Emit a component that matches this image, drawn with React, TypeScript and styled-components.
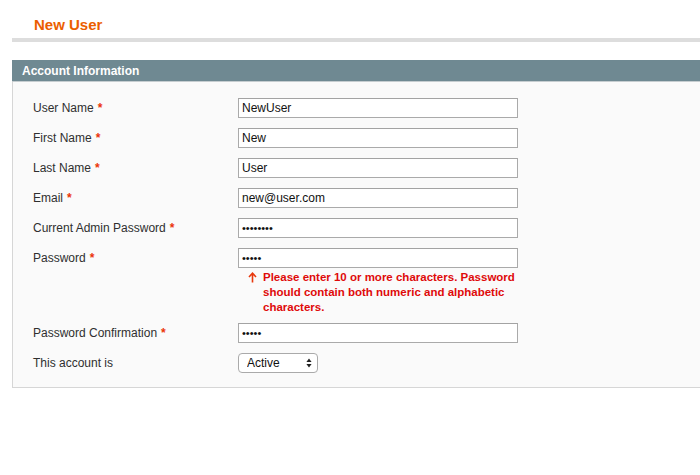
import styled, { createGlobalStyle } from 'styled-components';

const GlobalStyle = createGlobalStyle`
    html, body {
        margin: 0;
        padding: 0;
        background: #fff;
        font-family: "Liberation Sans", Arial, Helvetica, sans-serif;
    }
`

type Field = {
    label: string
    value: string
    required?: boolean
    type?: string
    error?: string
}

const fields: Field[] = [
    { label: 'User Name', value: 'NewUser', required: true },
    { label: 'First Name', value: 'New', required: true },
    { label: 'Last Name', value: 'User', required: true },
    { label: 'Email', value: 'new@user.com', required: true },
    { label: 'Current Admin Password', value: '12345678', required: true, type: 'password' },
    {
        label: 'Password',
        value: '12345',
        required: true,
        type: 'password',
        error: 'Please enter 10 or more characters. Password should contain both numeric and alphabetic characters.',
    },
    { label: 'Password Confirmation', value: '12345', required: true, type: 'password' },
]

const ArrowUp = () => (
    <svg width="9" height="11" viewBox="0 0 9 11">
        <path d="M4.5 10.5V1.5M1 5l3.5-3.8L8 5" fill="none" stroke="#e8380d" strokeWidth="1.6" />
    </svg>
)

const SelectArrows = () => (
    <svg width="6" height="10" viewBox="0 0 6 10">
        <path d="M3 0.5L5.6 4H0.4z M3 9.5L5.6 6H0.4z" fill="#222" />
    </svg>
)

const App = () => {
    return (
        <Page>
            <GlobalStyle />
            <TitleBar>
                <h3>New User</h3>
            </TitleBar>
            <Fieldset>
                <Legend>Account Information</Legend>
                <FormBody>
                    {fields.map((f) => (
                        <Row key={f.label}>
                            <Label>
                                {f.label}
                                {f.required && <span className="required">*</span>}
                            </Label>
                            <Value>
                                <TextInput type={f.type || 'text'} defaultValue={f.value} readOnly />
                                {f.error && (
                                    <Advice>
                                        <ArrowUp />
                                        <span>{f.error}</span>
                                    </Advice>
                                )}
                            </Value>
                        </Row>
                    ))}
                    <Row>
                        <Label>This account is</Label>
                        <Value>
                            <SelectWrap>
                                <select defaultValue="1">
                                    <option value="1">Active</option>
                                    <option value="0">Inactive</option>
                                </select>
                                <span className="arrows"><SelectArrows /></span>
                            </SelectWrap>
                        </Value>
                    </Row>
                </FormBody>
            </Fieldset>
        </Page>
    )
}
export default App;

const Page = styled.div`
    width: 700px;
    height: 475px;
    overflow: hidden;
    padding-left: 12px;
    box-sizing: border-box;
`

const TitleBar = styled.div`
    height: 38px;
    border-bottom: 4px solid #dddddd;
    margin-bottom: 18px;
    h3{
        margin: 0;
        padding: 16px 0 0 22px;
        font-size: 15px;
        line-height: 18px;
        font-weight: bold;
        color: #eb5e00;
    }
`

const Fieldset = styled.div`
    width: 720px;
    background: #fafafa;
    border-left: 1px solid #d6d6d6;
    border-bottom: 1px solid #d6d6d6;
`

const Legend = styled.div`
    margin-left: -1px;
    height: 21px;
    line-height: 22px;
    background: #6f8992;
    border-bottom: 1px solid #c6cdd0;
    color: #fff;
    font-size: 12px;
    font-weight: bold;
    padding-left: 10px;
`

const FormBody = styled.div`
    display: flex;
    flex-direction: column;
    gap: 10px;
    padding: 16px 0 14px 20px;
`

const Row = styled.div`
    display: grid;
    grid-template-columns: 205px 280px;
    align-items: start;
`

const Label = styled.label`
    font-size: 12px;
    line-height: 20px;
    color: #2f2f2f;
    .required{
        color: #eb340a;
        font-weight: bold;
        margin-left: 4px;
    }
`

const Value = styled.div`
    display: flex;
    flex-direction: column;
`

const TextInput = styled.input`
    box-sizing: border-box;
    width: 280px;
    height: 20px;
    margin: 0;
    padding: 0 3px;
    border: 1px solid #aaaaaa;
    border-top-color: #a3a3a3;
    background: #fff;
    font-family: "Liberation Sans", Arial, Helvetica, sans-serif;
    font-size: 12px;
    color: #111;
    outline: none;
    &[type='password']{
        font-size: 11px;
        letter-spacing: 0;
    }
`

const Advice = styled.div`
    display: flex;
    gap: 6px;
    margin: 2px 0 -2px 10px;
    font-size: 11.5px;
    line-height: 15px;
    font-weight: bold;
    color: #df0a0a;
    svg{
        flex: none;
        margin-top: 2px;
    }
`

const SelectWrap = styled.div`
    position: relative;
    width: 80px;
    height: 20px;
    select{
        appearance: none;
        -webkit-appearance: none;
        box-sizing: border-box;
        width: 80px;
        height: 20px;
        margin: 0;
        padding: 0 0 0 8px;
        border: 1px solid #aaaaaa;
        border-radius: 4px;
        background: #fff;
        font-family: "Liberation Sans", Arial, Helvetica, sans-serif;
        font-size: 12px;
        color: #111;
        outline: none;
    }
    .arrows{
        position: absolute;
        right: 6px;
        top: 5px;
        display: flex;
        pointer-events: none;
    }
`
